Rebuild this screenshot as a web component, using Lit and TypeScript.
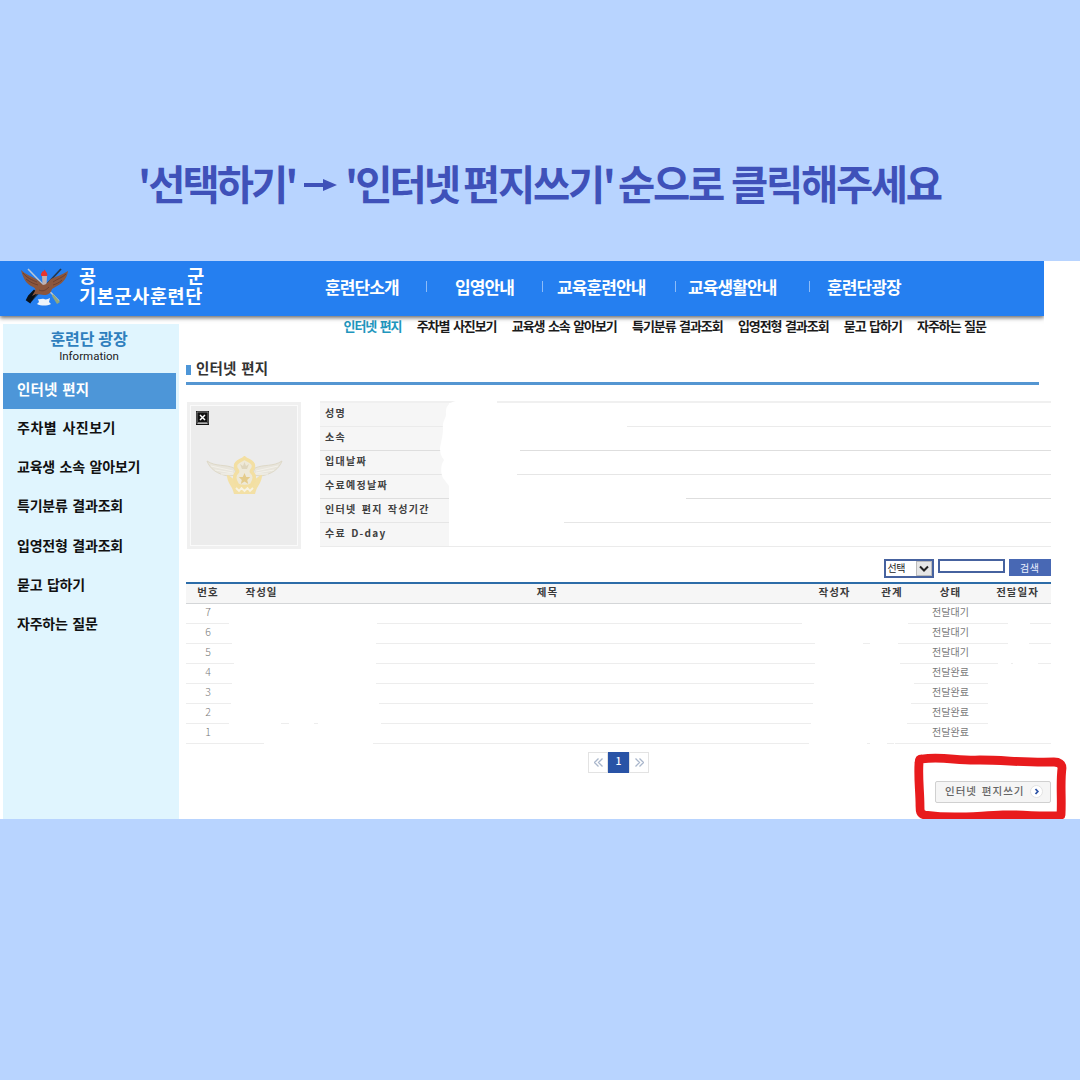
import { LitElement, html, svg, css } from "lit";
import { customElement } from "lit/decorators.js";

const NAV = ["훈련단소개", "입영안내", "교육훈련안내", "교육생활안내", "훈련단광장"];
const SUB = ["인터넷 편지", "주차별 사진보기", "교육생 소속 알아보기", "특기분류 결과조회", "입영전형 결과조회", "묻고 답하기", "자주하는 질문"];
const HEAD = ["번호", "작성일", "제목", "작성자", "관계", "상태", "전달일자"];

/* Rule segments are [start, end] measured from the left edge of the list. */
const ROWS: { no: number; state: string; rule: number[][] }[] = [
  { no: 7, state: "전달대기", rule: [[0, 43], [191, 616], [722, 822], [844, 865]] },
  { no: 6, state: "전달대기", rule: [[0, 46], [190, 629], [677, 684], [712, 822], [843, 865]] },
  { no: 5, state: "전달대기", rule: [[0, 48], [190, 629], [714, 812], [825, 827], [852, 865]] },
  { no: 4, state: "전달완료", rule: [[0, 46], [190, 628], [728, 802]] },
  { no: 3, state: "전달완료", rule: [[0, 45], [193, 627], [725, 802]] },
  { no: 2, state: "전달완료", rule: [[0, 43], [95, 103], [128, 132], [195, 625], [721, 802]] },
  { no: 1, state: "전달완료", rule: [[0, 78], [187, 623], [681, 684], [701, 708], [709, 865]] },
];

/* Profile rows: label and where the rule resumes after the blank value. */
const PROFILE: [string, number, string][] = [
  ["성명", 307, "light"],
  ["소속", 200, "dark"],
  ["입대날짜", 197, "mid"],
  ["수료예정날짜", 366, "dark"],
  ["인터넷 편지 작성기간", 244, "mid"],
  ["수료 D-day", 120, "light"],
];

@customElement("site-header")
class SiteHeader extends LitElement {
  static styles = css`
    :host { display: block; width: 1044px; }
    .bar { height: 55px; background: #257ff0; display: flex; color: #fff; box-shadow: 0 2px 4px rgba(50, 50, 50, 0.7); clip-path: inset(0 0 -8px 0); }
    .logo { margin: 7px 0 0 20px; width: 49px; height: 40px; flex: none; }
    .brand { margin: 4px 0 0 10px; width: 246px; flex: none; font-size: 18.5px; font-weight: 700; line-height: 20px; white-space: nowrap; letter-spacing: 0.7px; }
    .top { display: flex; justify-content: space-between; width: 126px; height: 20px; }
    .nav { display: flex; height: 51px; align-items: center; font-size: 17px; font-weight: 700; letter-spacing: -0.9px; white-space: nowrap; }
    .nav span { flex: none; }
    .sep { flex: none; width: 1px; height: 11px; background: #8dbcf8; }
    .n0 { width: 101px; } .n1 { width: 87px; margin-left: 28px; } .n2 { width: 118px; margin-left: 14px; }
    .n3 { width: 121px; margin-left: 12px; } .n4 { margin-left: 17px; }
    .sub { display: flex; gap: 15.3px; padding: 0 0 0 343.500px; height: 18px; align-items: center; font-size: 13px; font-weight: 700; letter-spacing: -1.07px; word-spacing: 1.6px; color: #1b1b1b; white-space: nowrap; margin-bottom: 4px; }
    .sub .on { color: #2196bd; }
  `;
  render() {
    return html`
      <div class="bar">
        <svg class="logo" viewBox="0 0 49 40">
          <path d="M8 1 39 33" stroke="#b9c8d8" stroke-width="1.6" />
          <path d="M41 1 11 33" stroke="#26384e" stroke-width="1.8" />
          <path d="m16 25-6 9-3-2 2-4 5-5z" fill="#08111c" stroke="#08111c" stroke-width="2" />
          <path d="m33 26 7 8-3 2-5-8" fill="#93a77c" />
          <path d="M22 8h5l-.6 12h-3.8z" fill="#bfb2b2" />
          <path d="M21.300 8c-1-2.500.7-3 1.300-5 .6 1 1 .5 1.900-1.500 1 2 3.500 3.500 2.800 6.500z" fill="#e8352e" />
          <path d="M1 2c4 4 10 6 15 9 3 2 5 4 7 6 3 0 5-3 8-6 6-3 11-4 17-8-1 7-5 12-11 15l-5 3c-1 4-4 6-8 6l-8-1-4 2 3-5c1-2 0-3-2-4C6 16 3 10 1 2Z" fill="#8b563d" />
          <path d="M3 5c4 5 9 7 14 9M6 11c4 3 8 5 12 6M46 6c-4 4-9 5-13 8M42 12c-3 3-6 4-9 5M19 22c4 2 7 0 10-3" fill="none" stroke="#6d4030" stroke-width="1" />
          <path d="M18 31c2 1 4-1 6 0s4 0 6-1l-1 4 2 2c-4 2-10 2-14 0l2-2z" fill="#edf3fa" />
        </svg>
        <div class="brand">
          <div class="top"><span>공</span><span>군</span></div>
          <div>기본군사훈련단</div>
        </div>
        <div class="nav">
          ${NAV.map((t, i) => html`<span class="n${i}">${t}</span>${i < 4 ? html`<i class="sep"></i>` : ""}`)}
        </div>
      </div>
      <div class="sub">${SUB.map((t, i) => html`<span class=${i ? "" : "on"}>${t}</span>`)}</div>
    `;
  }
}

@customElement("side-menu")
class SideMenu extends LitElement {
  static styles = css`
    :host { display: block; width: 176px; height: 495px; background: #e0f5fe; }
    .head { height: 49px; text-align: center; padding-right: 4px; box-sizing: border-box; }
    .ko { font-size: 16px; line-height: 20px; padding-top: 4px; font-weight: 700; color: #2f7fbd; white-space: nowrap; }
    .en { font: 11.5px/14px Roboto, "Liberation Sans", sans-serif; color: #222; padding-top: 1px; }
    .item { height: 39.2px; display: flex; align-items: center; padding: 0 0 3px 14px; font-size: 14px; font-weight: 700; letter-spacing: -0.2px; word-spacing: 1.6px; color: #111; white-space: nowrap; box-sizing: border-box; }
    .i1 { letter-spacing: 0.5px; }
    .on { width: 173px; height: 36px; background: #4d96d8; color: #fff; font-size: 14.5px; letter-spacing: 0.1px; padding-bottom: 5px; }
  `;
  render() {
    return html`
      <div class="head"><div class="ko">훈련단 광장</div><div class="en">Information</div></div>
      ${SUB.map((t, i) => html`<div class="item i${i} ${i ? "" : "on"}">${t}</div>`)}
    `;
  }
}

@customElement("trainee-profile")
class TraineeProfile extends LitElement {
  static styles = css`
    :host { display: flex; gap: 19px; height: 147px; }
    .photo { width: 114px; height: 147px; box-sizing: border-box; border: 3px solid #f0f0f0; background: #ececec; outline: 1px solid #fafafa; outline-offset: -4px; padding: 6px; display: flex; flex-direction: column; align-items: center; }
    .broken { width: 13px; height: 14px; align-self: flex-start; }
    .wings { width: 77px; height: 40px; margin-top: 31px; }
    .info { position: relative; width: 731px; border-top: 2px solid #f0f0f0; height: 143px; margin-top: -1px; }
    .row { height: 24.1px; box-sizing: border-box; display: grid; grid-template-columns: 129px 1fr; grid-template-rows: 23px 1px; font-size: 10px; font-weight: 700; letter-spacing: 1.3px; word-spacing: 1.6px; color: #404040; white-space: nowrap; }
    .label { background: #f6f6f6; padding-left: 5px; line-height: 20px; }
    .rule { grid-column: 1 / 3; width: 731px; height: 1px; }
    .light { stroke: #ebebeb; } .mid { stroke: #e6e6e6; } .dark { stroke: #dedede; }
    .erased { position: absolute; left: 117px; top: -3px; width: 60px; height: 147px; }
  `;
  render() {
    return html`
      <div class="photo">
        <svg class="broken" viewBox="0 0 13 14">
          <rect width="13" height="14" fill="#111" /><rect x="1" y="1" width="11" height="11.500" fill="none" stroke="#aaa" stroke-width=".7" />
          <path d="m4 4 5 5M9 4 4 9" stroke="#fff" stroke-width="1.500" />
          <path d="M2 12h9" stroke="#eee" />
        </svg>
        <svg class="wings" viewBox="0 0 77 40" fill="none">
          <path d="M1 5c9 6 18 3 27 7l3 7-9 1C11 18 4 13 1 5ZM76 5c-9 6-18 3-27 7l-3 7 9 1C66 18 73 13 76 5Z" fill="#e8e5dc" stroke="#ded9c8" />
          <path d="m5 10 22 5M9 14l18 3M15 18h13M72 10l-22 5M68 14l-18 3M62 18H49" stroke="#f3f1ea" stroke-width="1" />
          <path d="M21 19c0 8 5 10 7 19h21c2-9 7-11 7-19-3 0-4 3-7 4l-4 4h-13l-4-4c-3-1-4-4-7-4Z" fill="#f3e0a5" />
          <path d="M38.500 2c3 3 9 3 9 8 0 4-3 4-2 6 5 4 2 10 0 13-3 2-11 2-14 0-2-3-5-9 0-13 1-2-2-2-2-6 0-5 6-5 9-8Z" stroke="#f3dfa2" stroke-width="3.500" fill="#eee9d8" />
          <path d="m38.500 17 1.700 4h4l-3 3 1 4-3.700-2.500-3.700 2.500 1-4-3-3h4z" fill="#e5cc8b" />
          <path d="m34 8 2 5h5l2-5-3 2-1.500-4-1.500 4z" fill="#dfd6bd" />
          <path d="m30 32 3 3 2.500-3 3 3 3-3 2.500 3 3-3" stroke="#f8f3e2" stroke-width="1.800" />
        </svg>
      </div>
      <div class="info">
        ${PROFILE.map(([label, from, tone]) => html`
          <div class="row">
            <div class="label">${label}</div><div></div>
            <svg class="rule"><path class=${tone} d="M0 .5H129M${from} .5H731" /></svg>
          </div>`)}
        <svg class="erased" viewBox="0 0 60 147" fill="#fff">
          <path d="M60 1H19C13 2 8 6 9 14c0 5-4 7-3 15 0 6-2 13-3 19 0 5 1 8 4 12-3 4-4 12-1 18l6 8v58h48Z" />
        </svg>
      </div>
    `;
  }
}

@customElement("letter-list")
class LetterList extends LitElement {
  static styles = css`
    :host { display: block; width: 865px; }
    .search { display: flex; justify-content: flex-end; align-items: flex-start; gap: 4px; height: 23px; }
    .select { width: 50px; height: 19px; box-sizing: border-box; border: 2px solid #46629f; background: #fff; display: flex; justify-content: space-between; font-size: 10px; line-height: 13px; color: #222; padding-left: 2px; letter-spacing: -0.5px; }
    .drop { width: 16px; height: 15px; background: #e6e6e6; outline: 1px solid #bbb; outline-offset: -1px; }
    .input { width: 67px; height: 14px; box-sizing: border-box; border: 2px solid #46629f; background: #fff; }
    .go { width: 42.500px; height: 17px; background: #4868b4; color: #eaf0ff; text-align: center; font-size: 10px; line-height: 17px; letter-spacing: 0.6px; }
    .cells { display: grid; grid-template-columns: 44px 63px 509px 65px 50px 67px 67px; text-align: center; white-space: nowrap; }
    .head { height: 21.500px; box-sizing: border-box; border-top: 2px solid #2c6ca8; border-bottom: 1px solid #d4d6d8; background: #f6f6f6; font-size: 10.5px; line-height: 16px; font-weight: 700; letter-spacing: 1px; color: #3a3a3a; }
    .row { height: 19px; font-size: 10px; line-height: 16.500px; color: #777; }
    .no { font-size: 10.500px; font-weight: 300; }
    .state { grid-column: 6; }
    .rule { display: block; width: 865px; height: 1px; stroke: #ededed; }
    .pager { display: flex; width: 61px; height: 21px; margin: 8px 0 0 402px; box-sizing: border-box; }
    .page { width: 20px; box-sizing: border-box; border: 1px solid #e3e3e3; display: flex; align-items: center; justify-content: center; }
    .current { width: 21px; border-color: #2953a6; background: #2953a6; color: #fff; font-size: 10.5px; font-weight: 500; line-height: 18px; padding-bottom: 3px; }
    .write { display: flex; align-items: center; margin: 8px 0 0 auto; width: 116px; height: 22px; box-sizing: border-box; border: 1px solid #d0d0d0; border-radius: 2px; background: #f5f5f5; padding: 0 7px 3px 9px; justify-content: space-between; font-size: 10.5px; font-weight: 500; color: #666; letter-spacing: 1px; word-spacing: 1.5px; white-space: nowrap; }
    .go-icon { width: 13px; height: 13px; margin-top: 3px; flex: none; }
  `;
  render() {
    return html`
      <div class="search">
        <div class="select"><span>선택</span>
          <svg class="drop" viewBox="0 0 16 15"><path d="m4 5.500 4 4 4-4" fill="none" stroke="#222" stroke-width="2" /></svg>
        </div>
        <div class="input"></div>
        <div class="go">검색</div>
      </div>
      <div class="cells head">${HEAD.map((t) => html`<span>${t}</span>`)}</div>
      ${ROWS.map((r) => html`
        <div class="cells row"><span class="no">${r.no}</span><span class="state">${r.state}</span></div>
        <svg class="rule">${r.rule.map(([a, b]) => svg`<path d="M${a} .5H${b}" />`)}</svg>
      `)}
      <div class="pager">
        <div class="page"><svg width="9" height="9" viewBox="0 0 9 9" fill="none" stroke="#a9b6cb" stroke-width="1.300"><path d="M4.500.5l-4 4 4 4M8.500.5l-4 4 4 4" /></svg></div>
        <div class="page current">1</div>
        <div class="page"><svg width="9" height="9" viewBox="0 0 9 9" fill="none" stroke="#a9b6cb" stroke-width="1.300"><path d="M.5.500l4 4-4 4M4.500.5l4 4-4 4" /></svg></div>
      </div>
      <div class="write"><span>인터넷 편지쓰기</span>
        <svg class="go-icon" viewBox="0 0 13 13"><circle cx="6.500" cy="6.500" r="6" fill="#fff" stroke="#e2e2e2" /><path d="m5.500 4 2.300 2.500L5.500 9" fill="none" stroke="#2f55a8" stroke-width="1.800" /></svg>
      </div>
    `;
  }
}

@customElement("app-root")
class AppRoot extends LitElement {
  static styles = css`
    :host { display: block; width: 1080px; height: 1080px; overflow: hidden; background: #b8d4ff; font-family: "Noto Sans CJK KR", sans-serif; }
    .title { height: 261px; box-sizing: border-box; padding: 153px 0 0 138px; display: flex; font-size: 40.500px; line-height: 60px; font-weight: 700; letter-spacing: -2.3px; color: #3f51b9; white-space: nowrap; }
    .title span { flex: none; }
    .title .w0 { width: 166px; letter-spacing: -3px; } .arrow { width: 33px; height: 14px; margin: 25px 8px 0 0; flex: none; }
    .title .w2 { width: 118px; letter-spacing: -3px; } .title .w3 { width: 155px; } .title .w4 { width: 113px; }
    .shot { position: relative; height: 558px; background: #fff; overflow: hidden; }
    .body { display: flex; gap: 7px; padding-left: 3px; margin-top: -14px; }
    .main { padding-top: 34px; width: 865px; }
    .heading { width: 853px; height: 27px; box-sizing: border-box; border-bottom: 3px solid #5496d2; display: flex; gap: 5px; font-size: 14.5px; line-height: 19px; font-weight: 700; color: #333; letter-spacing: 0.1px; word-spacing: 1.6px; }
    .mark { width: 5px; height: 10px; margin-top: 7px; background: #4d96d8; }
    .profile { margin: 17px 0 0 1px; }
    .list { margin-top: 10px; }
    .ring { position: absolute; left: 905px; top: 485px; width: 175px; height: 73px; }
  `;
  render() {
    return html`
      <div class="title">
        <span class="w0">'선택하기'</span>
        <svg class="arrow" viewBox="0 0 33 14"><path d="M0 5h19V1l14 6-14 6V9H0Z" fill="#3f51b9" /></svg>
        <span class="w2">'인터넷</span><span class="w3">편지쓰기'</span><span class="w4">순으로</span><span>클릭해주세요</span>
      </div>
      <div class="shot">
        <site-header></site-header>
        <div class="body">
          <side-menu></side-menu>
          <div class="main">
            <div class="heading"><i class="mark"></i><span>인터넷 편지</span></div>
            <trainee-profile class="profile"></trainee-profile>
            <letter-list class="list"></letter-list>
          </div>
        </div>
        <svg class="ring" viewBox="905 746 175 73">
          <path d="M922 759c20-3 36 2 58 1 25 0 45 3 74 2 5 0 8 2 8 6-2 16 0 29-1 47-15 3-35-1-58 0-30 1-48 4-78 0-5-1-5-4-5-9 0-15-2-27-1-43 0-3 0-4 3-4Z" fill="none" stroke="#e81b1d" stroke-width="8.800" stroke-linejoin="round" />
        </svg>
      </div>
    `;
  }
}
